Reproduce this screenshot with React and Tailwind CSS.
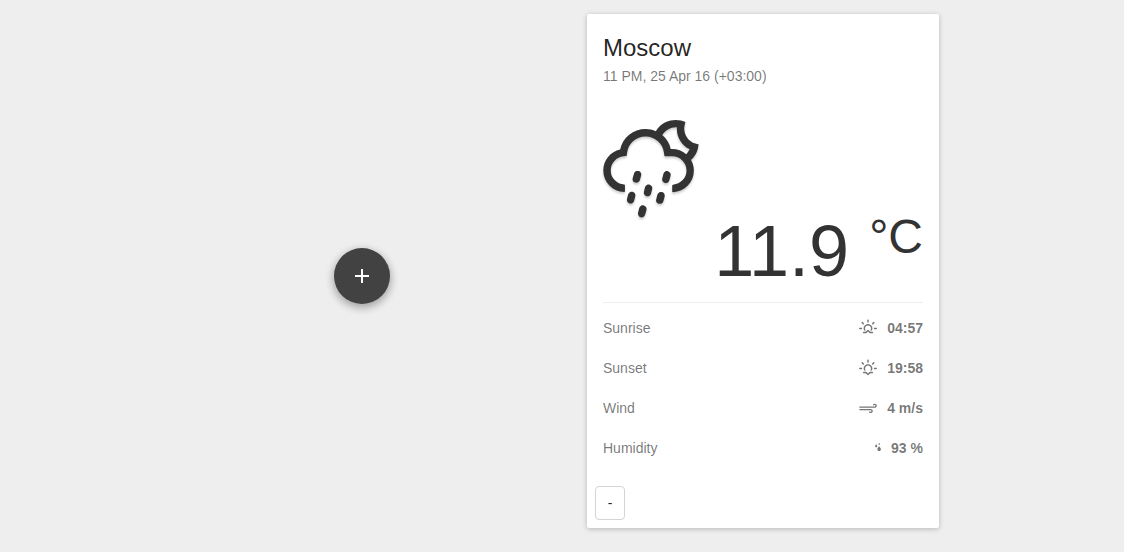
import {
  WiNightAltShowers,
  WiSunrise,
  WiSunset,
  WiStrongWind,
  WiRaindrops,
} from "react-icons/wi";

const details = [
  { label: "Sunrise", value: "04:57", Icon: WiSunrise, viewBox: "2.75 2.5 24.5 24.5", width: "w-[18px]" },
  { label: "Sunset", value: "19:58", Icon: WiSunset, viewBox: "2.75 2.5 24.5 24.5", width: "w-[18px]" },
  { label: "Wind", value: "4 m/s", Icon: WiStrongWind, viewBox: "2.75 2.5 24.5 24.5", width: "w-[18px]" },
  { label: "Humidity", value: "93 %", Icon: WiRaindrops, viewBox: "11 2.5 8 24.5", width: "w-1.5" },
];

function AddButton() {
  return (
    <button
      type="button"
      aria-label="Add city"
      className="flex size-14 items-center justify-center rounded-full bg-[#424242] text-white shadow-[0_3px_10px_rgba(0,0,0,0.23),0_3px_10px_rgba(0,0,0,0.16)]"
    >
      <svg viewBox="0 0 24 24" className="size-6" fill="currentColor" aria-hidden="true">
        <path d="M19 13h-6v6h-2v-6H5v-2h6V5h2v6h6v2z" />
      </svg>
    </button>
  );
}

function WeatherCard() {
  return (
    <article className="rounded-xs bg-white shadow-[0_1px_6px_rgba(0,0,0,0.12),0_1px_4px_rgba(0,0,0,0.12)]">
      <header className="px-4 pt-4">
        <h2 className="text-2xl leading-9 text-black/87">Moscow</h2>
        <p className="text-sm leading-5 text-black/54">11 PM, 25 Apr 16 (+03:00)</p>
      </header>
      <div className="px-4 pt-8">
        <WiNightAltShowers
          viewBox="4 4.9 22 22.9"
          className="h-25 w-24 text-[#333333] drop-shadow-[0_2px_1px_rgba(0,0,0,0.2)]"
          aria-hidden="true"
        />
        <p className="flex items-start justify-end gap-5 pt-px pb-[19px] text-[#333333]">
          <span className="text-7xl leading-16">11.9</span>
          <span className="text-5xl leading-9">°C</span>
        </p>
        <dl className="border-t border-[#eeeeee] pt-[5px] text-sm leading-5 text-black/54">
          {details.map(({ label, value, Icon, viewBox, width }) => (
            <div key={label} className="flex h-10 items-center justify-between">
              <dt>{label}</dt>
              <dd className="flex items-center gap-2.5 font-bold">
                <span className={width}>
                  <Icon viewBox={viewBox} className="h-[18px] w-full" aria-hidden="true" />
                </span>
                {value}
              </dd>
            </div>
          ))}
        </dl>
      </div>
      <footer className="p-2 pt-[18px]">
        <button
          type="button"
          aria-label="Remove Moscow"
          className="block h-[34px] w-[30px] rounded-sm border border-[#d4d4d4] text-sm leading-5 text-black/87"
        >
          -
        </button>
      </footer>
    </article>
  );
}

export default function App() {
  return (
    <main className="min-h-screen bg-[#eeeeee] font-['Liberation_Sans',Arial,sans-serif]">
      <div className="mx-auto grid max-w-[800px] grid-cols-2 items-center py-3.5">
        <div className="flex justify-center pt-2.5">
          <AddButton />
        </div>
        <div className="pr-[23px] pl-[25px]">
          <WeatherCard />
        </div>
      </div>
    </main>
  );
}
